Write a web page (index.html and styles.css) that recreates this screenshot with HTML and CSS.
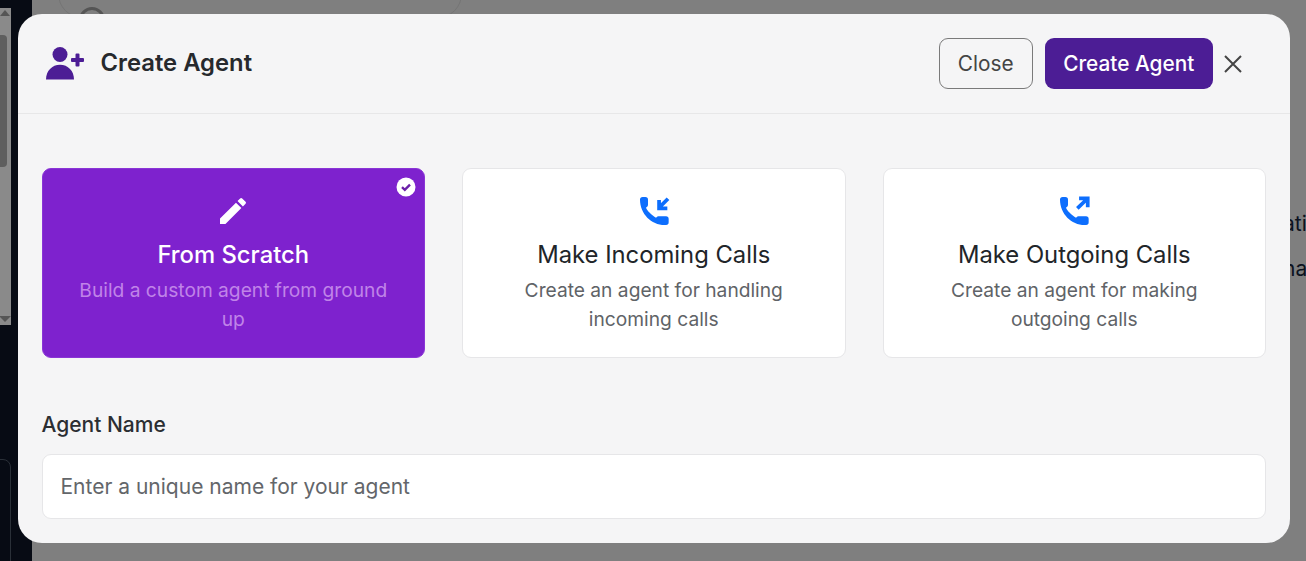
FILE: index.html
```html
<!DOCTYPE html>
<html lang="en">
<head>
<meta charset="utf-8">
<title>Create Agent</title>
<link rel="stylesheet" href="styles.css">
</head>
<body>
<div class="backdrop">
  <aside class="sidebar">
    <div class="scroll"><span class="scroll-up"></span><span class="scroll-thumb"></span><span class="scroll-down"></span></div>
    <div class="side-box"></div>
  </aside>
  <main class="page">
    <div class="search"><span class="search-icon"></span></div>
    <div class="peek peek-a">ati</div>
    <div class="peek peek-b">na</div>
  </main>
</div>
<section class="modal">
  <header class="modal-head">
    <svg class="head-icon" viewBox="0 0 38 34" aria-hidden="true"><circle cx="14" cy="8.5" r="7.5"/><path d="M0 33.5C0 25 6 18.800 14 18.800S28 25 28 33.500Z"/><path d="M29 7.500h3.500a1 1 0 0 1 1 1V12H37a1 1 0 0 1 1 1v2a1 1 0 0 1-1 1h-3.500v3.500a1 1 0 0 1-1 1h-2a1 1 0 0 1-1-1V16H26a1 1 0 0 1-1-1v-2a1 1 0 0 1 1-1h3.500V8.500a1 1 0 0 1 1-1Z"/></svg>
    <h1 class="head-title">Create Agent</h1>
    <div class="head-actions">
      <button class="btn btn-close">Close</button>
      <button class="btn btn-create">Create Agent</button>
      <svg class="x-icon" viewBox="0 0 20 20" aria-hidden="true"><path d="M2 2 18 18M18 2 2 18"/></svg>
    </div>
  </header>
  <div class="modal-body">
    <div class="cards">
      <div class="card card-active">
        <svg class="check" viewBox="0 0 20 20" aria-hidden="true"><circle cx="10" cy="10" r="9.500" fill="#fff"/><path d="M6 10.200 8.800 12.800 14 7.600" fill="none" stroke="#6b21a8" stroke-width="2.400"/></svg>
        <svg class="card-icon" viewBox="0.9 0.9 22.2 22.2" aria-hidden="true"><path fill="#fff" d="M3 17.250V21h3.750L17.810 9.940l-3.750-3.750L3 17.250zM20.710 7.040a1 1 0 0 0 0-1.410l-2.340-2.340a1 1 0 0 0-1.410 0l-1.830 1.830 3.750 3.750 1.830-1.830z"/></svg>
        <h2 class="card-title">From Scratch</h2>
        <p class="card-text">Build a custom agent from ground up</p>
      </div>
      <div class="card">
        <svg class="card-icon" viewBox="0 0 24 24" aria-hidden="true"><path fill="#0d6efd" d="M3.500 1.500h2a2 2 0 0 1 2 2v4a2 2 0 0 1-1 1.600l-.5.300C6.500 11.500 10.500 15.500 13.500 17l.4-.4a2 2 0 0 1 1.400-.6H21a2 2 0 0 1 2 2v2.500a2 2 0 0 1-2 2h-1C10 22.500 1.500 14 1.500 3.500a2 2 0 0 1 2-2Z"/><path d="M22.500 2.800 16 9.300M15.800 3.800v6.300h6.200" fill="none" stroke="#0d6efd" stroke-width="2.800"/></svg>
        <h2 class="card-title">Make Incoming Calls</h2>
        <p class="card-text">Create an agent for handling<br>incoming calls</p>
      </div>
      <div class="card">
        <svg class="card-icon" viewBox="0 0 24 24" aria-hidden="true"><path fill="#0d6efd" d="M3.500 1.500h2a2 2 0 0 1 2 2v4a2 2 0 0 1-1 1.600l-.5.300C6.500 11.500 10.500 15.500 13.500 17l.4-.4a2 2 0 0 1 1.400-.6H21a2 2 0 0 1 2 2v2.500a2 2 0 0 1-2 2h-1C10 22.500 1.500 14 1.500 3.500a2 2 0 0 1 2-2Z"/><path d="M14.500 10 22 2.800M15.800 2.600h6.500v6.500" fill="none" stroke="#0d6efd" stroke-width="2.800"/></svg>
        <h2 class="card-title">Make Outgoing Calls</h2>
        <p class="card-text">Create an agent for making<br>outgoing calls</p>
      </div>
    </div>
    <label class="field-label" for="agent-name">Agent Name</label>
    <input class="field-input" id="agent-name" type="text" placeholder="Enter a unique name for your agent">
  </div>
</section>
</body>
</html>
```
FILE: styles.css
```css
* { box-sizing: border-box; }
html, body { margin: 0; height: 100%; overflow: hidden; }
body { font-family: Inter, "Liberation Sans", sans-serif; background: #7f7f7f; color: #212529; }

.backdrop { display: flex; height: 561px; }
.sidebar { width: 32px; flex: none; background: #070b14; position: relative; }
.scroll { width: 11px; height: 317px; margin-top: 8px; background: #8a8a8a; position: relative; overflow: hidden; }
.scroll-thumb { position: absolute; left: 0; top: 27px; width: 7px; height: 132px; background: #5e5e5e; border-radius: 0 4px 4px 0; }
.scroll-up { position: absolute; left: 0; top: 2px; border: 5px solid transparent; border-top: 0; border-bottom: 6px solid #555; }
.scroll-down { position: absolute; left: -1px; bottom: 3px; border: 6px solid transparent; border-bottom: 0; border-top: 6px solid #555; }
.side-box { position: absolute; left: -12px; top: 459px; width: 23px; height: 120px; border: 1px solid #2a3038; border-radius: 8px; }
.page { flex: 1; position: relative; }
.search { position: absolute; left: 26px; top: -30px; width: 404px; height: 48px; border: 1px solid #757575; border-radius: 24px; }
.search-icon { position: absolute; left: 20px; top: 36px; width: 26px; height: 26px; border: 3px solid #555; border-radius: 50%; }
.peek { position: absolute; left: 1251px; font-size: 21px; color: #0c1220; }
.peek-a { top: 211px; }
.peek-b { top: 256px; }

.modal { position: absolute; left: 17.500px; top: 14px; width: 1272.500px; height: 529px; background: #f5f5f6; border-radius: 24px; overflow: hidden; }
.modal-head { height: 100px; display: flex; align-items: center; padding: 0 24px 2px 28px; border-bottom: 1px solid #e7e7e8; }
.head-icon { width: 38px; height: 34px; fill: #4c1d95; flex: none; }
.head-title { margin: 0 0 0 17px; font-size: 23.800px; font-weight: 600; color: #26292d; }
.head-actions { margin-left: auto; display: flex; align-items: center; gap: 12px; padding-top: 2px; }
.btn { font-family: inherit; font-size: 20.800px; height: 51px; border-radius: 9px; padding: 0; }
.btn-close { width: 93.500px; background: transparent; border: 1px solid #7a7a7a; color: #444; }
.btn-create { width: 168.500px; background: #4c1d95; border: 0; color: #fff; font-weight: 500; }
.x-icon { width: 20px; height: 20px; fill: none; stroke: #444; stroke-width: 2; margin-right: 23px; margin-left: -2px; }

.modal-body { padding: 54px 24px 0; }
.cards { display: grid; grid-template-columns: repeat(3, 1fr); gap: 37px; }
.card { position: relative; height: 190px; background: #fff; border: 1px solid #e6e6e8; border-radius: 9px; display: flex; flex-direction: column; align-items: center; text-align: center; padding: 26px 30px 0; }
.card-active { background: #7e22ce; border-color: #8a35d6; }
.check { position: absolute; top: 8px; right: 8px; width: 20px; height: 20px; }
.card-icon { width: 32px; height: 32px; flex: none; }
.card-title { margin: 10px 0 0; font-size: 23.800px; font-weight: 400; line-height: 36px; color: #212529; }
.card-text { margin: 3px 0 0; font-size: 19.200px; line-height: 29px; color: #606367; }
.card-active .card-title { color: #fff; font-weight: 500; }
.card-active .card-text { color: #c084e8; }

.field-label { display: block; margin-top: 52px; font-size: 21px; font-weight: 500; line-height: 30px; color: #2b2e32; }
.field-input { display: block; width: 100%; height: 65px; margin-top: 14px; padding: 0 18px; font-family: inherit; font-size: 21px; background: #fff; border: 1px solid #e6e6e8; border-radius: 9px; color: #212529; }
.field-input::placeholder { color: #63666a; opacity: 1; }
```
